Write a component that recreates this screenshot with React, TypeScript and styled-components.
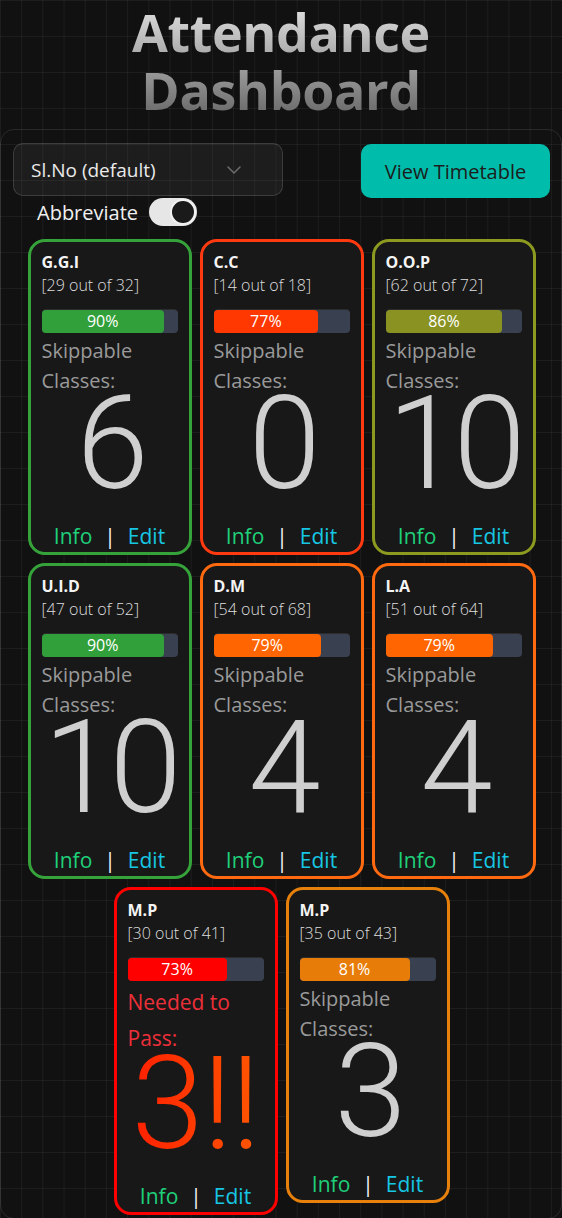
import * as React from 'react'
import styled, { createGlobalStyle } from 'styled-components'
import { ChevronDown } from 'lucide-react'

type Subject = {
  name: string
  attended: number
  total: number
  color: string
  fill?: string
  value: number
  needed?: boolean
}

const subjects: Subject[] = [
  { name: 'G.G.I', attended: 29, total: 32, color: '#36a33a', fill: '#31a03a', value: 6 },
  { name: 'C.C', attended: 14, total: 18, color: '#ff3a10', fill: '#ff3700', value: 0 },
  { name: 'O.O.P', attended: 62, total: 72, color: '#8c9b1f', fill: '#8a9322', value: 10 },
  { name: 'U.I.D', attended: 47, total: 52, color: '#36a33a', fill: '#31a03a', value: 10 },
  { name: 'D.M', attended: 54, total: 68, color: '#ff6a10', fill: '#ff6500', value: 4 },
  { name: 'L.A', attended: 51, total: 64, color: '#ff6a10', fill: '#ff6500', value: 4 },
  { name: 'M.P', attended: 30, total: 41, color: '#ff0000', fill: '#ff0000', value: 3, needed: true },
  { name: 'M.P', attended: 35, total: 43, color: '#e8800c', fill: '#e87c08', value: 3 },
]

const GlobalStyle = createGlobalStyle`
  html, body {
    margin: 0;
    padding: 0;
    background: #111111;
  }
  body {
    font-family: "Open Sans", "Noto Sans", sans-serif;
    color: #eee;
  }
`

const Card = ({ s }: { s: Subject }) => {
  const pct = Math.floor((s.attended / s.total) * 100)
  return (
    <CardBox $color={s.color}>
      <Name>{s.name}</Name>
      <Count>
        [{s.attended} out of {s.total}]
      </Count>
      <Track>
        <Fill style={{ width: `${pct}%` }} $color={s.fill ?? s.color}>
          {pct}%
        </Fill>
      </Track>
      <Label $danger={!!s.needed}>{s.needed ? 'Needed to' : 'Skippable'}</Label>
      <Label $danger={!!s.needed}>{s.needed ? 'Pass:' : 'Classes:'}</Label>
      <BigNumber $danger={!!s.needed}>
        {s.value}
        {s.needed ? '!!' : ''}
      </BigNumber>
      <Footer>
        <InfoLink>Info</InfoLink>
        <Sep>|</Sep>
        <EditLink>Edit</EditLink>
      </Footer>
    </CardBox>
  )
}

export default function App() {
  const [abbr, setAbbr] = React.useState(true)
  return (
    <Page>
      <GlobalStyle />
      <Title>
        Attendance
        <br />
        Dashboard
      </Title>
      <Panel>
        <Controls>
          <LeftCol>
            <Select>
              <span>Sl.No (default)</span>
              <ChevronDown size={24} color="#6c6c6c" strokeWidth={1.5} />
            </Select>
            <ToggleRow>
              <span>Abbreviate</span>
              <Toggle $on={abbr} onClick={() => setAbbr(!abbr)}>
                <Knob $on={abbr} />
              </Toggle>
            </ToggleRow>
          </LeftCol>
          <TimetableButton>View Timetable</TimetableButton>
        </Controls>
        <Cards>
          {subjects.map((s, i) => (
            <Card key={i} s={s} />
          ))}
        </Cards>
      </Panel>
    </Page>
  )
}

const Page = styled.div`
  min-height: 100vh;
  box-sizing: border-box;
  padding-bottom: 1px;
  background-color: #111111;
  background-image: linear-gradient(
      to right,
      rgba(255, 255, 255, 0.05) 1px,
      transparent 1px
    ),
    linear-gradient(to bottom, rgba(255, 255, 255, 0.05) 1px, transparent 1px);
  background-size: 21.2px 36px;
  background-position: 0 0;
`

const Title = styled.h1`
  margin: 0;
  padding-top: 3px;
  text-align: center;
  font-size: 52px;
  line-height: 58px;
  font-weight: 700;
  letter-spacing: -0.4px;
  background: linear-gradient(to bottom, #e0e0e0 5%, #6c6c6c 95%);
  -webkit-background-clip: text;
  background-clip: text;
  color: transparent;
`

const Panel = styled.div`
  margin-top: 10px;
  border: 1px solid rgba(255, 255, 255, 0.1);
  border-radius: 14px;
  padding: 13px 11px 3px 12px;
`

const Controls = styled.div`
  display: flex;
  justify-content: space-between;
  align-items: flex-start;
`

const LeftCol = styled.div`
  display: flex;
  flex-direction: column;
`

const Select = styled.div`
  box-sizing: border-box;
  width: 270px;
  height: 53px;
  display: flex;
  align-items: center;
  justify-content: space-between;
  padding: 0 36px 0 17px;
  border: 1px solid rgba(255, 255, 255, 0.14);
  border-radius: 10px;
  background: rgba(255, 255, 255, 0.05);
  font-size: 19px;
  color: #eaeaea;
`

const ToggleRow = styled.div`
  display: flex;
  align-items: center;
  gap: 11px;
  margin-top: 2px;
  padding-left: 24px;
  font-size: 20px;
  color: #f0f0f0;
`

const Toggle = styled.div<{ $on: boolean }>`
  box-sizing: border-box;
  width: 48px;
  height: 28px;
  border-radius: 14px;
  background: ${(p) => (p.$on ? '#e6e6e6' : '#555')};
  display: flex;
  align-items: center;
  justify-content: ${(p) => (p.$on ? 'flex-end' : 'flex-start')};
  padding: 1px;
  cursor: pointer;
`

const Knob = styled.div<{ $on: boolean }>`
  box-sizing: border-box;
  width: 26px;
  height: 26px;
  border-radius: 50%;
  background: #1a1a1a;
  border: 2px solid #f2f2f2;
`

const TimetableButton = styled.button`
  margin-top: 1px;
  width: 189px;
  height: 54px;
  border: none;
  border-radius: 10px;
  background: #00bcaa;
  color: #1c1c1c;
  font-family: inherit;
  font-size: 20px;
  cursor: pointer;
`

const Cards = styled.div`
  display: flex;
  flex-wrap: wrap;
  justify-content: center;
  align-items: flex-start;
  gap: 8px;
  margin-top: 13px;
`

const CardBox = styled.div<{ $color: string }>`
  box-sizing: border-box;
  width: 164px;
  border: 3px solid ${(p) => p.$color};
  border-radius: 17px;
  background: #181818;
  padding: 9px 11px 0 11px;
  display: flex;
  flex-direction: column;
`

const Name = styled.div`
  font-size: 16px;
  line-height: 22px;
  font-weight: 700;
  color: #f4f4f4;
`

const Count = styled.div`
  font-size: 16px;
  line-height: 24px;
  font-weight: 300;
  color: #dedede;
`

const Track = styled.div`
  margin-top: 13px;
  margin-bottom: 3px;
  height: 23px;
  border-radius: 4px;
  background: #394050;
  box-shadow: 0 -1px 0 #2c2c2c;
  display: flex;
`

const Fill = styled.div<{ $color: string }>`
  height: 100%;
  border-radius: 4px;
  background: ${(p) => p.$color};
  color: #fff;
  font-size: 16px;
  line-height: 23px;
  text-align: center;
`

const Label = styled.div<{ $danger: boolean }>`
  font-size: ${(p) => (p.$danger ? '21px' : '20px')};
  line-height: ${(p) => (p.$danger ? '36px' : '30px')};
  color: ${(p) => (p.$danger ? '#ec2f38' : '#9a9a9a')};
`

const BigNumber = styled.div<{ $danger: boolean }>`
  font-family: Roboto, "Open Sans", sans-serif;
  font-size: 130px;
  line-height: 152px;
  margin-top: -28px;
  font-weight: 300;
  text-align: center;
  white-space: nowrap;
  letter-spacing: ${(p) => (p.$danger ? '-1px' : '-6px')};
  color: ${(p) => (p.$danger ? 'transparent' : '#cfcfcf')};
  background: ${(p) =>
    p.$danger ? 'linear-gradient(to right, #ff1e00, #ff5800)' : 'none'};
  -webkit-background-clip: ${(p) => (p.$danger ? 'text' : 'border-box')};
  background-clip: ${(p) => (p.$danger ? 'text' : 'border-box')};
`

const Footer = styled.div`
  display: flex;
  justify-content: center;
  gap: 12px;
  font-size: 21px;
  line-height: 32px;
`

const InfoLink = styled.span`
  color: #1fd07a;
`

const EditLink = styled.span`
  color: #16c6e2;
`

const Sep = styled.span`
  color: #f4f4f4;
`
